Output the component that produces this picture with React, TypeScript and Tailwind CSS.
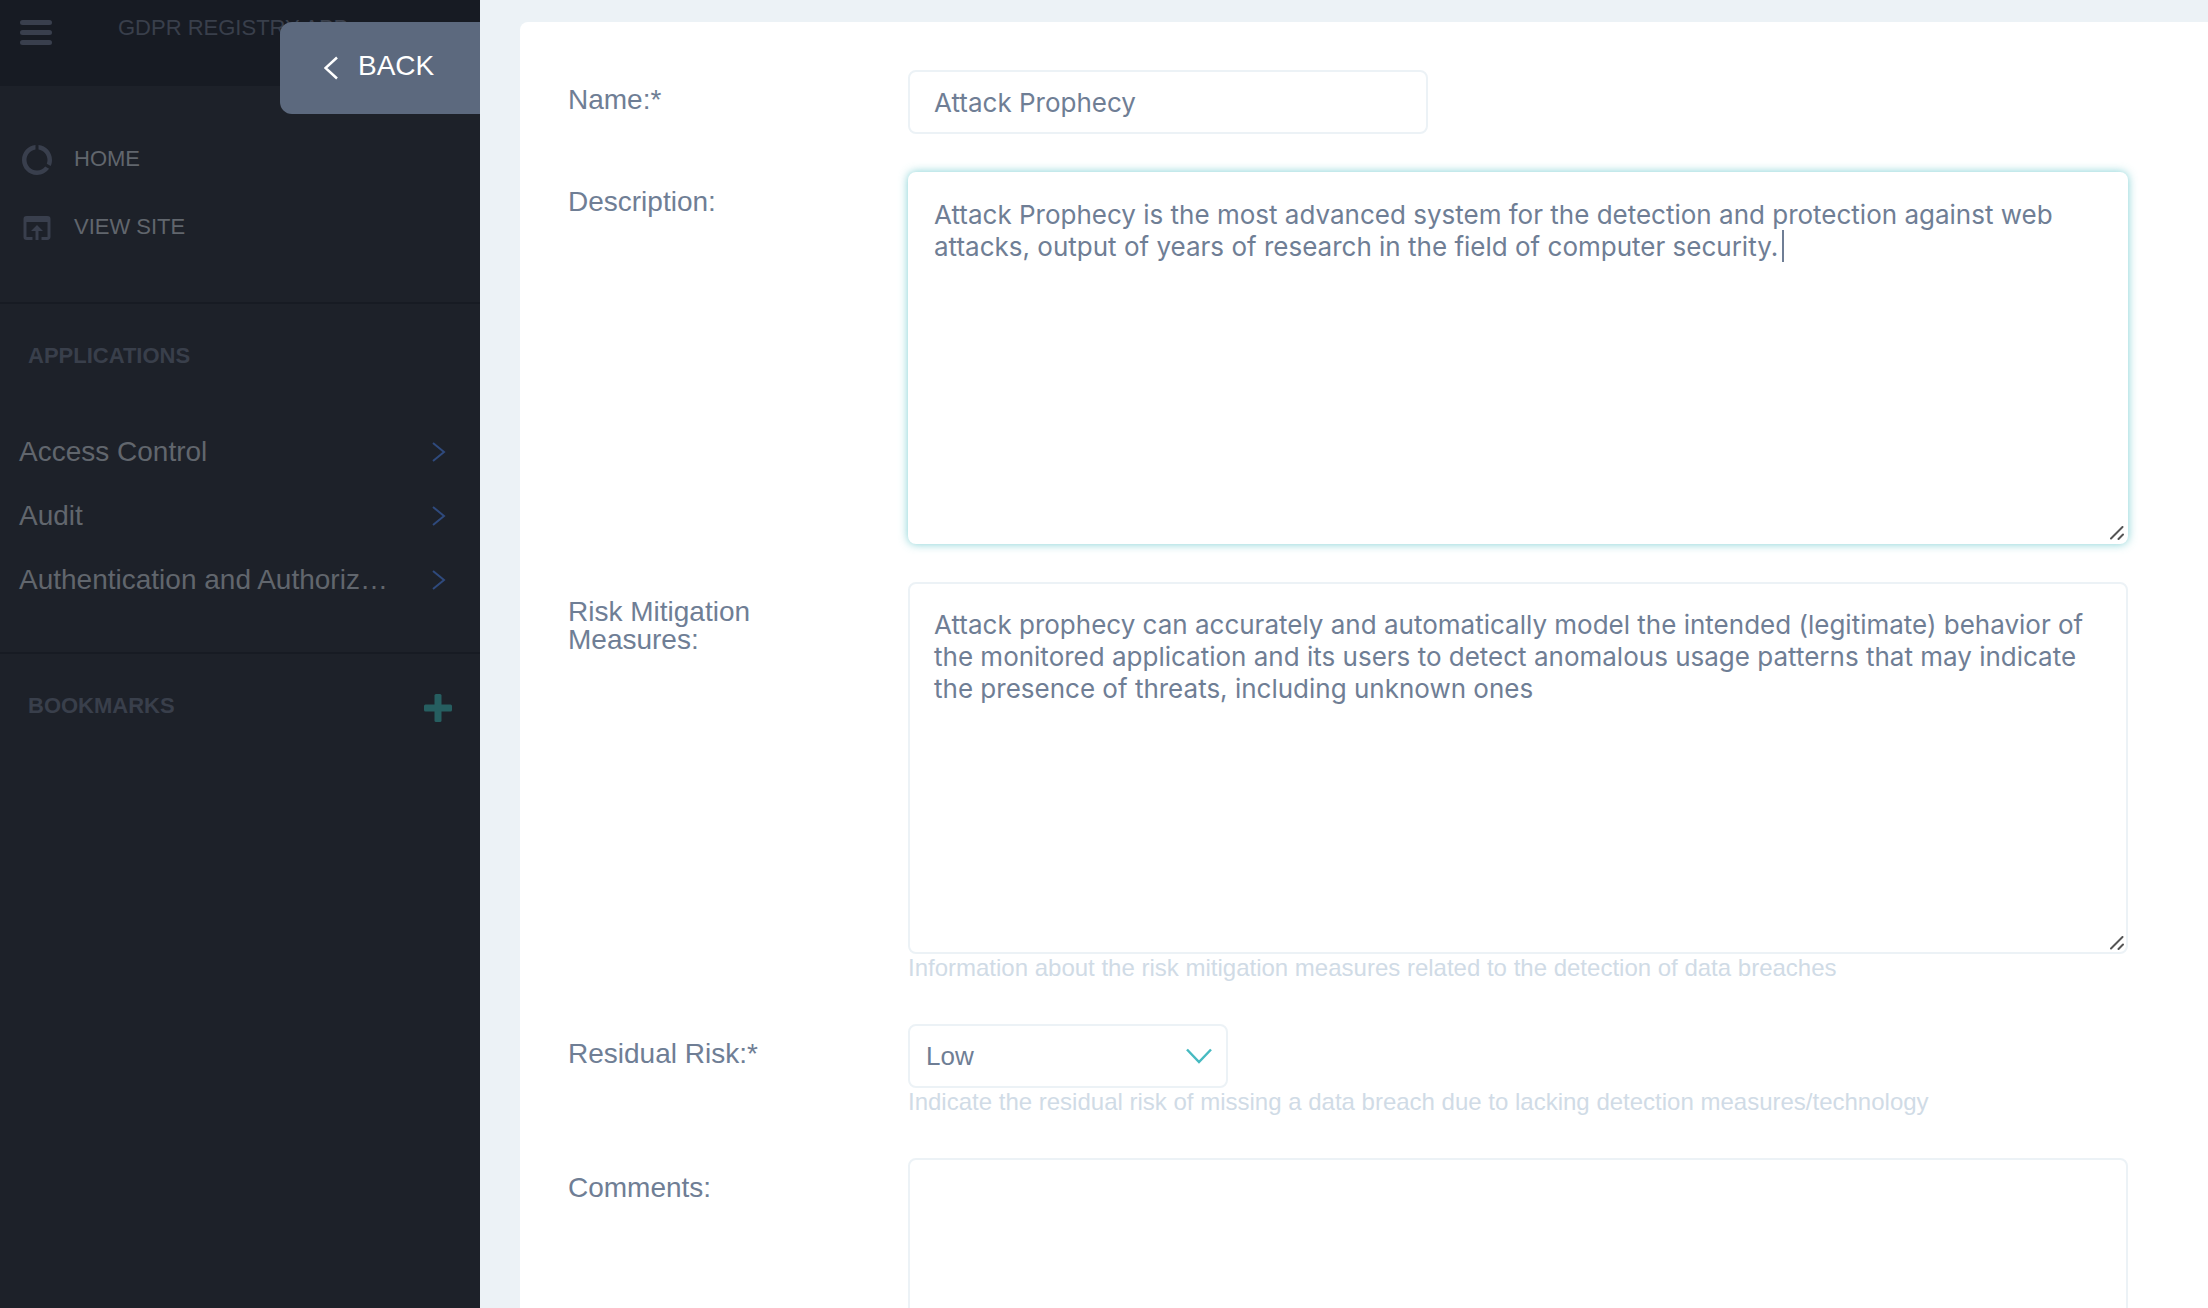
import type { ReactNode } from "react";
import { MdDataUsage, MdOpenInBrowser } from "react-icons/md";

const links = [
  { label: "HOME", Icon: MdDataUsage },
  { label: "VIEW SITE", Icon: MdOpenInBrowser },
];

const applications = ["Access Control", "Audit", "Authentication and Authoriz…"];

const fieldClass =
  "block rounded-lg border-2 border-[#ecf2f6] bg-white text-[#6f7e95] outline-none";
const areaClass =
  "block h-[372px] w-full resize-none rounded-lg border-2 bg-white px-6 py-[25px] font-['Inter',sans-serif] text-[26px] leading-[32px] text-[#6f7e95] outline-none";

function Sidebar() {
  return (
    <aside className="relative w-[480px] shrink-0 bg-[#1d2129]">
      <header className="flex h-[86px] items-start bg-[#171b23] pl-5">
        <button type="button" aria-label="Toggle menu" className="mt-5 flex w-8 flex-col gap-[5px]">
          <span className="h-[5px] w-full rounded-full bg-[#393f4d]" />
          <span className="h-[5px] w-full rounded-full bg-[#393f4d]" />
          <span className="h-[5px] w-full rounded-full bg-[#393f4d]" />
        </button>
        <a href="#app" className="mt-4 ml-[66px] text-[22px] leading-6 text-[#393f4b]">
          GDPR REGISTRY APP
        </a>
      </header>

      <button
        type="button"
        className="absolute top-[22px] right-0 flex h-[92px] w-[200px] items-center rounded-l-xl bg-[#5c697e] pb-1 pl-11 text-[28px] leading-8 text-white"
      >
        <svg viewBox="0 0 14 24" className="mt-1 mr-5 h-6 w-[14px]" fill="none" stroke="currentColor" strokeWidth="2.5">
          <path d="M13 1.500 1.500 12 13 22.500" />
        </svg>
        BACK
      </button>

      <nav className="border-b-2 border-[#171b23] pt-[38px] pb-[42px]">
        {links.map(({ label, Icon }) => (
          <a key={label} href="#nav" className="flex h-[68px] items-center pl-[19px] text-[22px] text-[#61666d]">
            <Icon className="mt-1 mr-[19px] size-9 text-[#393f4d]" />
            {label}
          </a>
        ))}
      </nav>

      <section className="border-b-2 border-[#171b23] pt-10 pb-10">
        <h2 className="pl-7 text-[22px] leading-6 font-bold text-[#393f4b]">APPLICATIONS</h2>
        <ul className="pt-[52px]">
          {applications.map((name) => (
            <li key={name}>
              <a href="#application" className="flex h-16 items-center justify-between pr-[34px] pl-[19px] text-[28px] leading-8 text-[#61666d]">
                {name}
                <svg viewBox="0 0 14 20" className="h-5 w-[14px]" fill="none" stroke="#2f4a7d" strokeWidth="2">
                  <path d="M1 1l11 9-11 9" />
                </svg>
              </a>
            </li>
          ))}
        </ul>
      </section>

      <section className="flex items-start justify-between pt-10 pr-7 pl-7">
        <h2 className="text-[22px] leading-6 font-bold text-[#393f4b]">BOOKMARKS</h2>
        <button type="button" aria-label="Add bookmark">
          <svg viewBox="0 0 28 28" className="size-7" fill="#265e60">
            <rect x="10.500" width="7" height="28" rx="1.500" />
            <rect y="10.500" width="28" height="7" rx="1.500" />
          </svg>
        </button>
      </section>
    </aside>
  );
}

function Grip() {
  return (
    <svg
      viewBox="0 0 14 14"
      className="pointer-events-none absolute right-1 bottom-1 size-[14px]"
      stroke="#555"
      strokeWidth="2"
      strokeLinecap="round"
    >
      <path d="M1 12.500 12.500 1M8.500 13 13 8.500" />
    </svg>
  );
}

function Row({ id, label, help, children }: { id: string; label: string; help?: string; children: ReactNode }) {
  return (
    <div className="flex items-start">
      <label htmlFor={id} className="w-[340px] shrink-0 pt-4 pr-24 text-[28px] leading-7 text-[#6f7e95]">
        {label}
      </label>
      <div className="min-w-0 flex-1">
        {children}
        {help && <p className="mb-1 text-2xl leading-7 text-[#d0dbe6]">{help}</p>}
      </div>
    </div>
  );
}

export default function App() {
  return (
    <div className="flex h-screen overflow-hidden bg-[#ecf2f6] font-['Liberation_Sans',Arial,sans-serif]">
      <Sidebar />
      <main className="min-w-0 flex-1 pt-[22px] pl-10">
        <form className="flex flex-col gap-[38px] rounded-tl-lg bg-white pt-12 pr-20 pb-12 pl-12">
          <Row id="name" label="Name:*">
            <input
              id="name"
              defaultValue="Attack Prophecy"
              className={`${fieldClass} h-16 w-[520px] px-6 font-['Inter',sans-serif] text-[26px]`}
            />
          </Row>
          <Row id="description" label="Description:">
            <div className="relative">
              <textarea
                id="description"
                defaultValue="Attack Prophecy is the most advanced system for the detection and protection against web attacks, output of years of research in the field of computer security. "
                className={`${areaClass} border-white shadow-[0_0_10px_#47bac1b3]`}
              />
              <span className="absolute top-[58px] left-[874px] h-8 w-0.5 bg-[#6f7e95]" />
              <Grip />
            </div>
          </Row>
          <Row
            id="measures"
            label="Risk Mitigation Measures:"
            help="Information about the risk mitigation measures related to the detection of data breaches"
          >
            <div className="relative">
              <textarea
                id="measures"
                defaultValue="Attack prophecy can accurately and automatically model the intended (legitimate) behavior of the monitored application and its users to detect anomalous usage patterns that may indicate the presence of threats, including unknown ones"
                className={`${areaClass} border-[#ecf2f6]`}
              />
              <Grip />
            </div>
          </Row>
          <Row
            id="risk"
            label="Residual Risk:*"
            help="Indicate the residual risk of missing a data breach due to lacking detection measures/technology"
          >
            <div className="relative w-80">
              <select id="risk" className={`${fieldClass} h-16 w-full appearance-none px-4 text-[26px]`}>
                <option>Low</option>
                <option>Medium</option>
                <option>High</option>
              </select>
              <svg
                viewBox="0 0 26 16"
                className="pointer-events-none absolute top-6 right-4 h-4 w-[26px]"
                fill="none"
                stroke="#47bac1"
                strokeWidth="2.5"
              >
                <path d="M1 1.500l12 12.500L25 1.500" />
              </svg>
            </div>
          </Row>
          <Row id="comments" label="Comments:">
            <textarea id="comments" className={`${areaClass} border-[#ecf2f6]`} />
          </Row>
        </form>
      </main>
    </div>
  );
}
